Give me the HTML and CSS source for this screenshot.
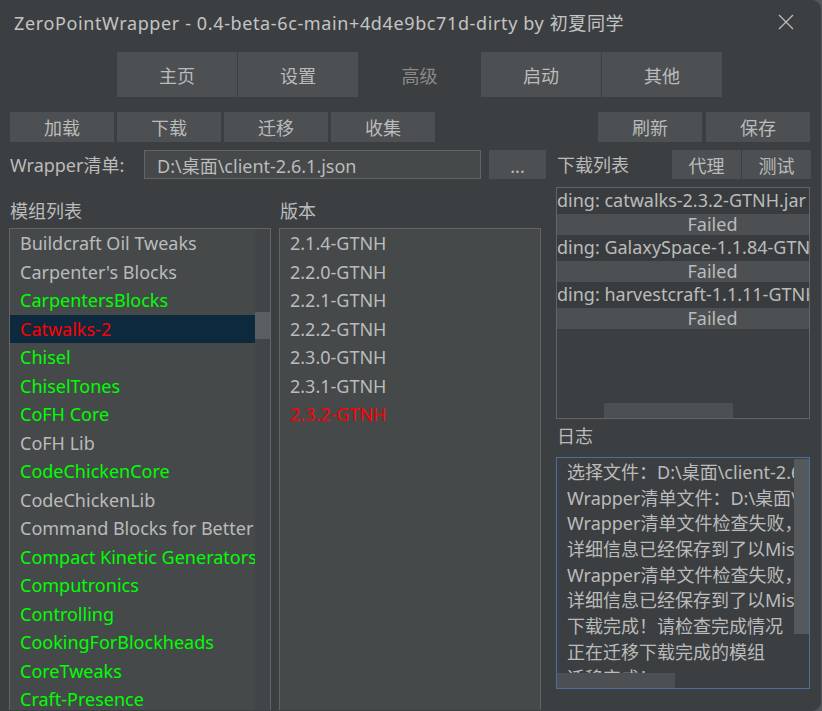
FILE: index.html
```html
<!DOCTYPE html>
<html lang="zh-CN">
<head>
<meta charset="utf-8">
<title>ZeroPointWrapper</title>
<link rel="stylesheet" href="styles.css">
</head>
<body>
<div class="window">
  <div class="titlebar">
    <span class="title">ZeroPointWrapper - 0.4-beta-6c-main+4d4e9bc71d-dirty by 初夏同学</span>
    <svg class="close" width="16" height="16" viewBox="0 0 16 16"><path d="M1 1 L15 15 M15 1 L1 15" stroke="#bbbbbb" stroke-width="1.3" fill="none"/></svg>
  </div>

  <div class="tabs">
    <div class="tab">主页</div>
    <div class="tab">设置</div>
    <div class="tab active">高级</div>
    <div class="tab">启动</div>
    <div class="tab">其他</div>
  </div>

  <div class="toolbar">
    <div class="group">
      <div class="btn wide">加载</div>
      <div class="btn wide">下载</div>
      <div class="btn wide">迁移</div>
      <div class="btn wide">收集</div>
    </div>
    <div class="group right-group">
      <div class="btn wide">刷新</div>
      <div class="btn wide">保存</div>
    </div>
  </div>

  <div class="main">
    <div class="left">
      <div class="wrapper-row">
        <span class="label wrapper-label">Wrapper清单:</span>
        <div class="input">D:\桌面\client-2.6.1.json</div>
        <div class="btn dots">...</div>
      </div>
      <div class="lists">
        <div class="col">
          <div class="label col-label">模组列表</div>
          <div class="listbox">
            <div class="items">
              <div class="item">Buildcraft Oil Tweaks</div>
              <div class="item">Carpenter's Blocks</div>
              <div class="item green">CarpentersBlocks</div>
              <div class="item red selected">Catwalks-2</div>
              <div class="item green">Chisel</div>
              <div class="item green">ChiselTones</div>
              <div class="item green">CoFH Core</div>
              <div class="item">CoFH Lib</div>
              <div class="item green">CodeChickenCore</div>
              <div class="item">CodeChickenLib</div>
              <div class="item">Command Blocks for Better Redstone</div>
              <div class="item green">Compact Kinetic Generators</div>
              <div class="item green">Computronics</div>
              <div class="item green">Controlling</div>
              <div class="item green">CookingForBlockheads</div>
              <div class="item green">CoreTweaks</div>
              <div class="item green">Craft-Presence</div>
            </div>
            <div class="vscroll"><div class="vthumb"></div></div>
          </div>
        </div>
        <div class="col">
          <div class="label col-label">版本</div>
          <div class="listbox">
            <div class="items">
              <div class="item">2.1.4-GTNH</div>
              <div class="item">2.2.0-GTNH</div>
              <div class="item">2.2.1-GTNH</div>
              <div class="item">2.2.2-GTNH</div>
              <div class="item">2.3.0-GTNH</div>
              <div class="item">2.3.1-GTNH</div>
              <div class="item red">2.3.2-GTNH</div>
            </div>
          </div>
        </div>
      </div>
    </div>

    <div class="right">
      <div class="dl-header">
        <span class="label dl-label">下载列表</span>
        <div class="btn small">代理</div>
        <div class="btn small">测试</div>
      </div>
      <div class="dlbox">
        <div class="dl-rows">
          <div class="dl-text">ding: catwalks-2.3.2-GTNH.jar</div>
          <div class="dl-bar">Failed</div>
          <div class="dl-text">ding: GalaxySpace-1.1.84-GTNH.jar</div>
          <div class="dl-bar">Failed</div>
          <div class="dl-text">ding: harvestcraft-1.1.11-GTNH.jar</div>
          <div class="dl-bar">Failed</div>
        </div>
        <div class="hscroll"><div class="hthumb dl-thumb"></div></div>
      </div>
      <div class="label log-label">日志</div>
      <div class="logbox">
        <div class="log-main">
          <div class="log-text">
            <div class="log-line">选择文件：D:\桌面\client-2.6.1.json</div>
            <div class="log-line">Wrapper清单文件：D:\桌面\client-2.6.1.json</div>
            <div class="log-line">Wrapper清单文件检查失败，</div>
            <div class="log-line">详细信息已经保存到了以Missing</div>
            <div class="log-line">Wrapper清单文件检查失败，</div>
            <div class="log-line">详细信息已经保存到了以Missing</div>
            <div class="log-line">下载完成！请检查完成情况</div>
            <div class="log-line">正在迁移下载完成的模组</div>
            <div class="log-line">迁移完成！</div>
          </div>
          <div class="log-vscroll"><div class="log-vthumb"></div></div>
        </div>
        <div class="log-hscroll"><div class="log-hthumb"></div><div class="log-corner"></div></div>
      </div>
    </div>
  </div>
</div>
</body>
</html>
```

FILE: styles.css
```css
* { box-sizing: border-box; }

html, body {
  margin: 0;
  padding: 0;
  width: 822px;
  height: 711px;
  overflow: hidden;
  background: #55585a;
}

.window {
  width: 821px;
  height: 711px;
  background: #3c3f41;
  border-radius: 0 9px 9px 0;
  overflow: hidden;
  color: #bbbbbb;
  font-family: "Noto Sans", "Noto Sans CJK SC", sans-serif;
  font-size: 18px;
  display: flex;
  flex-direction: column;
}

.titlebar {
  height: 44px;
  flex: none;
  display: flex;
  align-items: center;
  justify-content: space-between;
  padding: 0 27px 0 14px;
}

.title {
  white-space: nowrap;
  color: #c4c4c4;
  letter-spacing: 0.62px;
}

.close { display: block; }

.tabs {
  margin-top: 8px;
  height: 45px;
  flex: none;
  display: flex;
  gap: 1px;
  padding-left: 117px;
}

.tab {
  width: 120px;
  height: 45px;
  background: #4c5052;
  display: flex;
  align-items: center;
  justify-content: center;
}

.tab.active {
  background: transparent;
  color: #8a8a8a;
  width: 121px;
}

.toolbar {
  margin-top: 15px;
  height: 30px;
  flex: none;
  display: flex;
  justify-content: space-between;
  padding: 0 11px 0 10px;
}

.group {
  display: flex;
  gap: 3px;
}

.right-group { gap: 4px; }

.btn {
  background: #4c5052;
  display: flex;
  align-items: center;
  justify-content: center;
  white-space: nowrap;
}

.btn.wide {
  width: 104px;
  height: 30px;
}

.main {
  margin-top: 8px;
  flex: none;
  display: flex;
  gap: 10px;
  padding-left: 9px;
}

.left {
  width: 537px;
  display: flex;
  flex-direction: column;
}

.label {
  white-space: nowrap;
  line-height: 24px;
}

.wrapper-row {
  height: 29px;
  display: flex;
  align-items: center;
}

.wrapper-label {
  width: 135px;
  padding-left: 1px;
}

.input {
  width: 337px;
  height: 29px;
  background: #45494a;
  border: 1px solid #646464;
  padding-left: 12px;
  display: flex;
  align-items: center;
  white-space: nowrap;
}

.btn.dots {
  width: 57px;
  height: 29px;
  margin-left: 8px;
  padding-top: 3px;
}

.lists {
  display: flex;
  gap: 8px;
  margin-top: 20px;
}

.col {
  width: 262px;
  display: flex;
  flex-direction: column;
}

.col-label {
  padding-left: 1px;
  height: 24px;
}

.listbox {
  margin-top: 5px;
  height: 482px;
  background: #45494a;
  border: 1px solid #646464;
  border-bottom: none;
  display: flex;
  overflow: hidden;
}

.items {
  flex: 1;
  min-width: 0;
  overflow: hidden;
}

.item {
  height: 28.5px;
  line-height: 28.5px;
  padding-left: 10px;
  white-space: nowrap;
  overflow: hidden;
}

.item.green { color: #00ff00; }
.item.red { color: #ff0000; }
.item.selected { background: #0d293e; }

.vscroll {
  width: 15px;
  flex: none;
  background: #424547;
  padding-top: 83px;
}

.vthumb {
  height: 27px;
  background: #5b5f61;
}

.right {
  width: 255px;
  display: flex;
  flex-direction: column;
}

.dl-header {
  height: 29px;
  display: flex;
  align-items: center;
  gap: 1px;
}

.dl-label {
  flex: 1;
  padding-left: 1px;
}

.btn.small {
  width: 69px;
  height: 29px;
}

.dlbox {
  margin-top: 8px;
  width: 254px;
  height: 232px;
  border: 1px solid #646464;
  display: flex;
  flex-direction: column;
}

.dl-rows {
  flex: 1;
  overflow: hidden;
}

.dl-text {
  height: 25.5px;
  line-height: 25.5px;
  white-space: nowrap;
  overflow: hidden;
  background: #393c3e;
}

.dl-bar {
  height: 21.5px;
  line-height: 21.5px;
  background: #4c5052;
  text-align: center;
  padding-left: 59px;
}

.hscroll {
  height: 15px;
  flex: none;
  padding-left: 47px;
}

.hthumb {
  width: 129px;
  height: 15px;
  background: #4c5052;
}

.log-label {
  margin-top: 5px;
  padding-left: 1px;
}

.logbox {
  margin-top: 9px;
  width: 254px;
  height: 232px;
  border: 1px solid #4a70a0;
  display: flex;
  flex-direction: column;
}

.log-main {
  flex: 1;
  display: flex;
  min-height: 0;
}

.log-text {
  flex: 1;
  min-width: 0;
  overflow: hidden;
  padding: 2px 0 0 10px;
}

.log-line {
  height: 25.7px;
  line-height: 25.7px;
  white-space: nowrap;
}

.log-vscroll {
  width: 15px;
  flex: none;
  padding-top: 1px;
}

.log-vthumb {
  height: 175px;
  background: #55595b;
}

.log-hscroll {
  height: 15px;
  flex: none;
  display: flex;
  justify-content: space-between;
}

.log-hthumb {
  width: 118px;
  background: #4c5052;
}

.log-corner {
  width: 15px;
  background: #3c3f41;
}
```
